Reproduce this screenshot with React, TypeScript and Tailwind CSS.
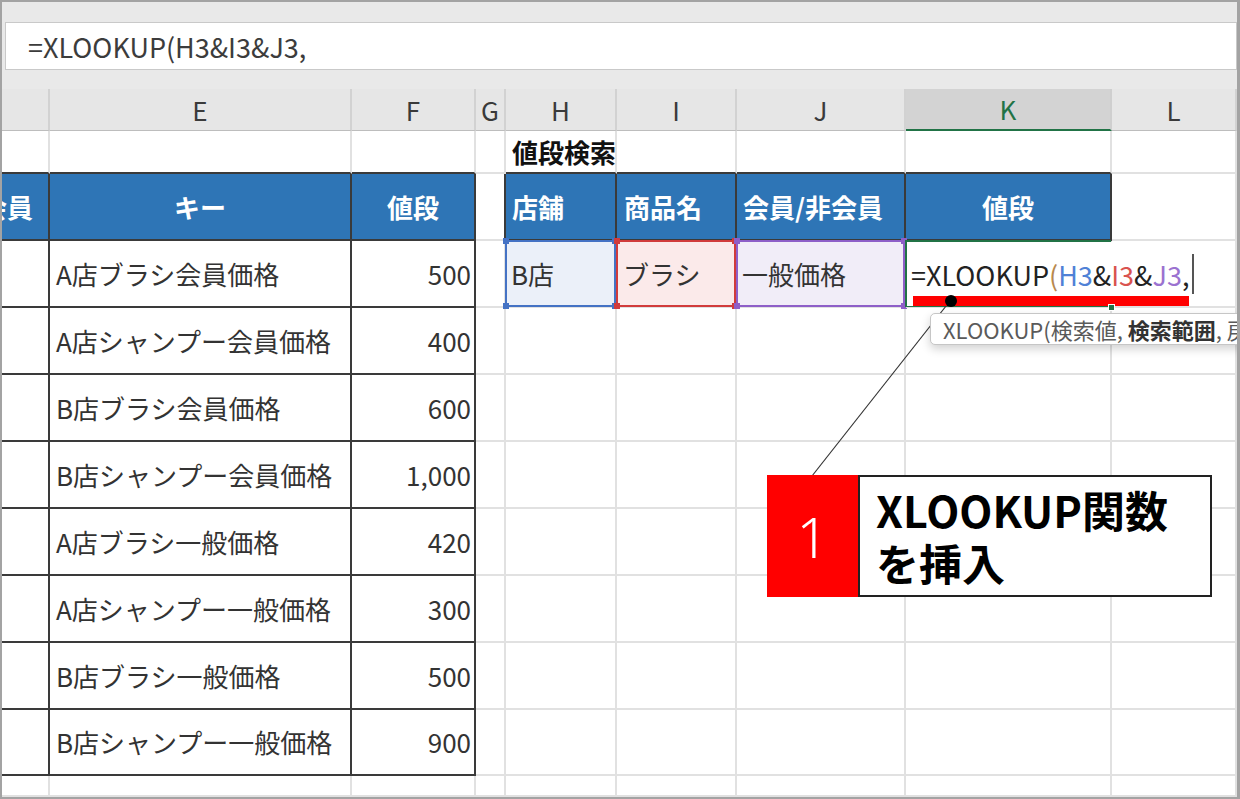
import React from "react";

const GR = "border-r-[#e1e1e1]";
const DR = "border-r-[#3a3a3a]";
const GB = "border-b-[#e1e1e1]";
const DB = "border-b-[#3a3a3a]";

const data: [string, string][] = [
  ["A店ブラシ会員価格", "500"],
  ["A店シャンプー会員価格", "400"],
  ["B店ブラシ会員価格", "600"],
  ["B店シャンプー会員価格", "1,000"],
  ["A店ブラシ一般価格", "420"],
  ["A店シャンプー一般価格", "300"],
  ["B店ブラシ一般価格", "500"],
  ["B店シャンプー一般価格", "900"],
];

function Cell({
  r,
  b,
  className = "",
  children,
}: {
  r: string;
  b: string;
  className?: string;
  children?: React.ReactNode;
}) {
  return (
    <div className={`border-r-2 border-b-2 ${r} ${b} ${className}`}>{children}</div>
  );
}

const TXT = "flex items-center text-[26px] leading-none whitespace-nowrap";

function Range({ color, bg }: { color: string; bg: string }) {
  return (
    <div className={`absolute -left-[1px] -top-[1px] -right-[1px] -bottom-[1px] border-2 ${color}`}>
      <div className={`absolute -left-[4px] -top-[4px] w-[6px] h-[6px] ${bg}`} />
      <div className={`absolute -right-[4px] -top-[4px] w-[6px] h-[6px] ${bg}`} />
      <div className={`absolute -left-[4px] -bottom-[4px] w-[6px] h-[6px] ${bg}`} />
      <div className={`absolute -right-[4px] -bottom-[4px] w-[6px] h-[6px] ${bg}`} />
    </div>
  );
}

function HeaderLetter({ label, active = false }: { label: string; active?: boolean }) {
  if (active) {
    return (
      <div className="bg-[#d3d3d3] border-r-2 border-r-[#cfcfcf] border-b-2 border-b-[#217346] flex items-center justify-center text-[26px] leading-none text-[#217346]">
        {label}
      </div>
    );
  }
  return (
    <div className="bg-[#e6e6e6] border-r-2 border-r-[#d2d2d2] border-b border-b-[#bdbdbd] flex items-center justify-center text-[26px] leading-none text-[#3a3a3a]">
      {label}
    </div>
  );
}

export default function App() {
  return (
    <div className="relative w-[1240px] h-[799px] overflow-hidden bg-white border-t-2 border-l-2 border-r-[3px] border-b-2 border-[#a3a3a3] font-['Noto_Sans_CJK_JP','Noto_Sans',sans-serif] text-[#333] flex flex-col">
      {/* formula bar area */}
      <div className="h-[87px] shrink-0 bg-[#e9e9e9] pt-[20px] pl-[3px]">
        <div className="h-[48px] bg-white border border-[#c9c9c9] flex items-center pl-[22px] text-[27px] leading-none text-[#3c3c3c] whitespace-nowrap">
          {"=XLOOKUP(H3&I3&J3,"}
        </div>
      </div>

      {/* sheet grid */}
      <div className="flex-1 grid grid-cols-[48px_302px_124px_30px_111px_120px_169px_206px_1fr] grid-rows-[42px_43px_67px_67px_67px_67px_67px_67px_67px_67px_66px_1fr]">
        {/* column letters */}
        <HeaderLetter label="" />
        <HeaderLetter label="E" />
        <HeaderLetter label="F" />
        <HeaderLetter label="G" />
        <HeaderLetter label="H" />
        <HeaderLetter label="I" />
        <HeaderLetter label="J" />
        <HeaderLetter label="K" active />
        <HeaderLetter label="L" />

        {/* row 1 */}
        <Cell r={GR} b={DB} />
        <Cell r={GR} b={DB} />
        <Cell r={GR} b={DB} />
        <Cell r={GR} b={GB} />
        <Cell r={GR} b={DB} className={`${TXT} pl-[6px] font-bold text-[#111]`}>
          値段検索
        </Cell>
        <Cell r={GR} b={DB} />
        <Cell r={GR} b={DB} />
        <Cell r={GR} b={DB} />
        <Cell r={GR} b={GB} />

        {/* row 2: table headers */}
        <Cell r={DR} b={DB} className={`${TXT} bg-[#2e75b6] text-white font-bold justify-end pr-[15px] overflow-hidden`}>
          会員
        </Cell>
        <Cell r={DR} b={DB} className={`${TXT} bg-[#2e75b6] text-white font-bold justify-center`}>
          キー
        </Cell>
        <Cell r={DR} b={DB} className={`${TXT} bg-[#2e75b6] text-white font-bold justify-center`}>
          値段
        </Cell>
        <Cell r={DR} b={GB} />
        <Cell r={DR} b={DB} className={`${TXT} bg-[#2e75b6] text-white font-bold pl-[6px]`}>
          店舗
        </Cell>
        <Cell r={DR} b={DB} className={`${TXT} bg-[#2e75b6] text-white font-bold pl-[7px]`}>
          商品名
        </Cell>
        <Cell r={DR} b={DB} className={`${TXT} bg-[#2e75b6] text-white font-bold pl-[6px]`}>
          会員/非会員
        </Cell>
        <Cell r={DR} b={DB} className={`${TXT} bg-[#2e75b6] text-white font-bold justify-center`}>
          値段
        </Cell>
        <Cell r={GR} b={GB} />

        {/* data rows */}
        {data.map(([key, price], i) => (
          <React.Fragment key={i}>
            <Cell r={DR} b={DB} />
            <Cell r={DR} b={DB} className={`${TXT} pl-[6px]`}>
              {key}
            </Cell>
            <Cell r={DR} b={DB} className={`${TXT} justify-end pr-[3px]`}>
              {price}
            </Cell>
            <Cell r={GR} b={GB} />
            {i === 0 ? (
              <>
                <Cell r={GR} b={GB} className={`${TXT} relative bg-[#ebf0f9] pl-[5px]`}>
                  B店
                  <Range color="border-[#4472c4]" bg="bg-[#4472c4]" />
                </Cell>
                <Cell r={GR} b={GB} className={`${TXT} relative bg-[#fbeaea] pl-[6px]`}>
                  ブラシ
                  <Range color="border-[#d13b3b]" bg="bg-[#d13b3b]" />
                </Cell>
                <Cell r={GR} b={GB} className={`${TXT} relative bg-[#f1edf8] pl-[5px]`}>
                  一般価格
                  <Range color="border-[#8e5fc8]" bg="bg-[#8e5fc8]" />
                </Cell>
                <Cell r={GR} b={GB} className="relative">
                  <div className="absolute -left-[1px] -top-[1px] -right-[1px] -bottom-[1px] border-2 border-[#217346]" />
                  <div className="absolute left-[1px] top-[1px] h-[64px] w-[289px] bg-white flex items-center pl-[4px] text-[27px] leading-none whitespace-nowrap text-[#222]">
                    <span>=XLOOKUP</span>
                    <span className="text-[#b8894e]">(</span>
                    <span className="text-[#4f81d6]">H3</span>
                    <span>&amp;</span>
                    <span className="text-[#d9534f]">I3</span>
                    <span>&amp;</span>
                    <span className="text-[#9b72d0]">J3</span>
                    <span>,</span>
                    <span className="ml-[3px] h-[40px] w-[2px] bg-[#555]" />
                  </div>
                  <div className="absolute -right-[5px] -bottom-[5px] w-[7px] h-[7px] bg-[#217346] border border-white z-20" />
                </Cell>
              </>
            ) : (
              <>
                <Cell r={GR} b={GB} />
                <Cell r={GR} b={GB} />
                <Cell r={GR} b={GB} />
                <Cell r={GR} b={GB} />
              </>
            )}
            <Cell r={GR} b={GB} />
          </React.Fragment>
        ))}

        {/* trailing row */}
        {Array.from({ length: 9 }).map((_, i) => (
          <Cell key={`t${i}`} r={GR} b={GB} />
        ))}
      </div>

      {/* annotations */}
      <svg className="absolute left-0 top-0 w-[1240px] h-[799px] pointer-events-none" viewBox="0 0 1240 799">
        <line x1="948" y1="299" x2="810" y2="474" stroke="#333" strokeWidth="1.2" />
      </svg>
      <div className="absolute left-[911px] top-[294px] w-[276px] h-[10px] bg-[#ff0000]" />
      <div className="absolute left-[943px] top-[293px] w-[12px] h-[12px] rounded-full bg-black" />

      {/* tooltip */}
      <div className="absolute left-[928px] top-[311px] w-[420px] h-[32px] rounded-[5px] border border-[#c6c6c6] bg-white shadow-[0_4px_10px_rgba(0,0,0,0.18)] flex items-center pl-[12px] text-[22px] leading-none text-[#5a5a5a] whitespace-nowrap">
        XLOOKUP(検索値,&nbsp;<span className="font-bold text-[#333]">検索範囲</span>, 戻り配列, [見つからない場合])
      </div>

      {/* callout */}
      <div className="absolute left-[765px] top-[473px] flex">
        <div className="w-[91px] h-[122px] bg-[#ff0000] flex items-center justify-center text-white text-[56px] font-light leading-none font-['Noto_Sans',sans-serif]">
          1
        </div>
        <div className="w-[354px] h-[122px] border-2 border-[#222] bg-white flex items-center pl-[16px] text-[43px] leading-[53px] font-bold text-black">
          <div>
            XLOOKUP関数
            <br />
            を挿入
          </div>
        </div>
      </div>
    </div>
  );
}
